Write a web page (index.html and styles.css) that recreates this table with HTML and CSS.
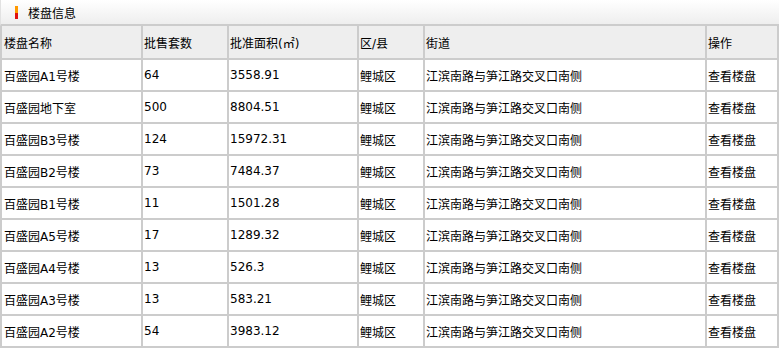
FILE: index.html
```html
<!DOCTYPE html>
<html lang="zh-CN">
<head>
<meta charset="utf-8">
<title>楼盘信息</title>
<link rel="stylesheet" href="styles.css">
</head>
<body>
<div class="panel">
  <div class="panel-title"><span class="marker"></span><span class="title-text">楼盘信息</span></div>
  <div class="grid">
    <div class="cell head first">楼盘名称</div>
    <div class="cell head">批售套数</div>
    <div class="cell head">批准面积(㎡)</div>
    <div class="cell head">区/县</div>
    <div class="cell head">街道</div>
    <div class="cell head">操作</div>

    <div class="cell first">百盛园A1号楼</div><div class="cell">64</div><div class="cell">3558.91</div><div class="cell">鲤城区</div><div class="cell">江滨南路与笋江路交叉口南侧</div><div class="cell">查看楼盘</div>
    <div class="cell first">百盛园地下室</div><div class="cell">500</div><div class="cell">8804.51</div><div class="cell">鲤城区</div><div class="cell">江滨南路与笋江路交叉口南侧</div><div class="cell">查看楼盘</div>
    <div class="cell first">百盛园B3号楼</div><div class="cell">124</div><div class="cell">15972.31</div><div class="cell">鲤城区</div><div class="cell">江滨南路与笋江路交叉口南侧</div><div class="cell">查看楼盘</div>
    <div class="cell first">百盛园B2号楼</div><div class="cell">73</div><div class="cell">7484.37</div><div class="cell">鲤城区</div><div class="cell">江滨南路与笋江路交叉口南侧</div><div class="cell">查看楼盘</div>
    <div class="cell first">百盛园B1号楼</div><div class="cell">11</div><div class="cell">1501.28</div><div class="cell">鲤城区</div><div class="cell">江滨南路与笋江路交叉口南侧</div><div class="cell">查看楼盘</div>
    <div class="cell first">百盛园A5号楼</div><div class="cell">17</div><div class="cell">1289.32</div><div class="cell">鲤城区</div><div class="cell">江滨南路与笋江路交叉口南侧</div><div class="cell">查看楼盘</div>
    <div class="cell first">百盛园A4号楼</div><div class="cell">13</div><div class="cell">526.3</div><div class="cell">鲤城区</div><div class="cell">江滨南路与笋江路交叉口南侧</div><div class="cell">查看楼盘</div>
    <div class="cell first">百盛园A3号楼</div><div class="cell">13</div><div class="cell">583.21</div><div class="cell">鲤城区</div><div class="cell">江滨南路与笋江路交叉口南侧</div><div class="cell">查看楼盘</div>
    <div class="cell first">百盛园A2号楼</div><div class="cell">54</div><div class="cell">3983.12</div><div class="cell">鲤城区</div><div class="cell">江滨南路与笋江路交叉口南侧</div><div class="cell">查看楼盘</div>
  </div>
</div>
</body>
</html>
```

FILE: styles.css
```css
html, body {
  margin: 0;
  padding: 0;
  background: #ffffff;
}

body {
  font-family: "DejaVu Sans", "Noto Sans CJK SC", sans-serif;
  font-size: 12px;
  color: #000000;
}

.panel {
  width: 779px;
}

.panel-title {
  height: 24px;
  display: flex;
  align-items: center;
  background: linear-gradient(#ffffff, #eeeeee);
  border-left: 1px solid #e2e2e2;
  border-bottom: 2px solid #cccccc;
}

.marker {
  width: 3px;
  height: 13px;
  margin-left: 14px;
  margin-right: 10px;
  background: linear-gradient(#ff9900 0, #ff9900 54%, #e01010 54%, #e01010 100%);
}

.title-text {
  font-size: 12px;
  color: #000000;
}

.grid {
  display: grid;
  grid-template-columns: 139px 84px 128px 64px 280px 70px;
  grid-template-rows: 32px;
  grid-auto-rows: 30px;
  gap: 2px;
  padding: 0 2px 2px 2px;
  background: #cccccc;
}

.cell {
  background: #ffffff;
  display: flex;
  align-items: center;
  padding-left: 1px;
  white-space: nowrap;
  overflow: hidden;
}

.cell.first {
  padding-left: 2px;
}

.cell.head {
  background: #eeeeee;
}
```
